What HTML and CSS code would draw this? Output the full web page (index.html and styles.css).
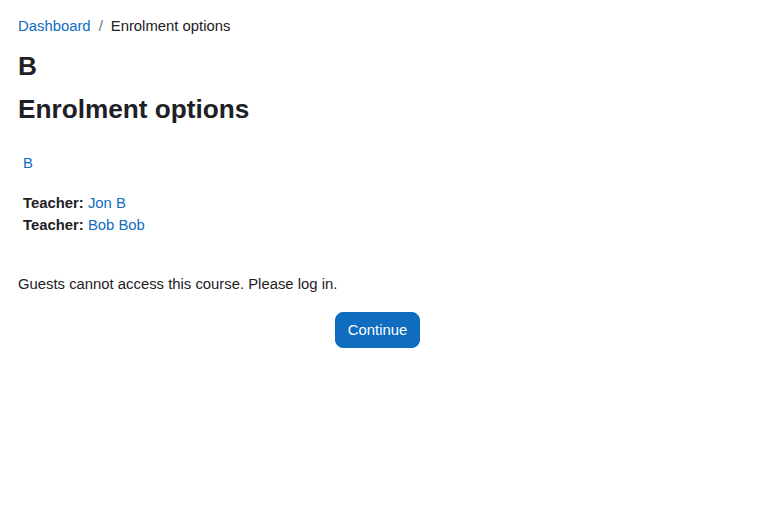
FILE: index.html
```html
<!DOCTYPE html>
<html lang="en">
<head>
<meta charset="utf-8">
<title>Enrolment options</title>
<link rel="stylesheet" href="styles.css">
</head>
<body>
<div class="page">
  <nav class="breadcrumb">
    <a href="#">Dashboard</a><span class="sep">/</span><span>Enrolment options</span>
  </nav>
  <h2 class="title">B</h2>
  <h2 class="subtitle">Enrolment options</h2>
  <div class="course">
    <a class="coursename" href="#">B</a>
    <ul class="teachers">
      <li><strong>Teacher:</strong> <a href="#">Jon B</a></li>
      <li><strong>Teacher:</strong> <a href="#">Bob Bob</a></li>
    </ul>
  </div>
  <p class="notice">Guests cannot access this course. Please log in.</p>
  <div class="actions">
    <button class="btn">Continue</button>
  </div>
</div>
</body>
</html>
```
FILE: styles.css
```css
html, body {
  margin: 0;
  padding: 0;
  background: #fff;
}
body {
  font-family: "Liberation Sans", Arial, sans-serif;
  font-size: 14.85px;
  line-height: 22.5px;
  color: #1d2125;
}
a {
  color: #0f6cbf;
  text-decoration: none;
}
.page {
  padding: 15px 40px 0 18px;
}
.breadcrumb {
  display: flex;
  align-items: center;
  height: 22.5px;
}
.sep {
  color: #6a737b;
  padding: 0 8px;
}
.title, .subtitle {
  font-size: 26.2px;
  font-weight: 700;
  line-height: 1.2;
  margin: 0;
}
.title {
  margin-top: 13.8px;
}
.subtitle {
  margin-top: 11.6px;
}
.course {
  padding-left: 5px;
  margin-top: 26px;
}
.coursename {
  display: block;
}
.teachers {
  list-style: none;
  padding: 0;
  margin: 17.5px 0 0;
}
.teachers strong {
  font-weight: 700;
}
.notice {
  margin: 36px 0 0;
}
.actions {
  display: flex;
  justify-content: center;
  margin-top: 16.75px;
}
.btn {
  font-family: inherit;
  font-size: 14.85px;
  line-height: 22px;
  height: 36px;
  color: #fff;
  background: #0f6cbf;
  border: 1px solid #0f6cbf;
  border-radius: 8px;
  padding: 6px 12px;
}
```
